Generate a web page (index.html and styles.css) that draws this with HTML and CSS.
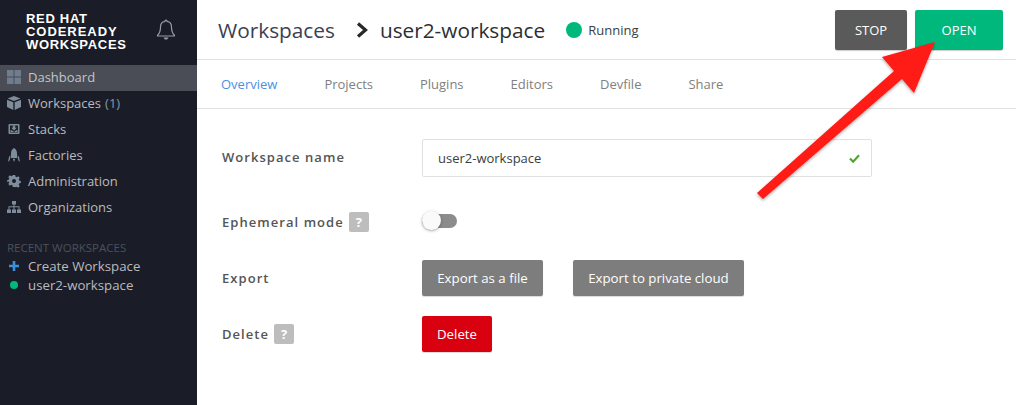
FILE: index.html
```html
<!DOCTYPE html>
<html lang="en">
<head>
  <meta charset="UTF-8">
  <title>Workspaces</title>
  <link rel="stylesheet" href="styles.css">
</head>
<body>
  <div class="page">
    <!-- Left navigation -->
    <aside class="sidebar">
      <div class="brand">
        <div class="logo">
          <div>RED HAT</div>
          <div class="logo-mid">CODEREADY</div>
          <div>WORKSPACES</div>
        </div>
        <svg class="bell" viewBox="0 0 20 22" width="20" height="22">
          <path d="M10 1.200c.7 0 1.100.5 1.100 1.200 2.900.5 4.400 2.800 4.400 5.600 0 3.600.6 6 2.900 8.200v.8H1.600v-.8C3.900 14 4.500 11.600 4.500 8c0-2.800 1.500-5.100 4.400-5.600 0-.7.4-1.200 1.100-1.200z" fill="none" stroke="#9a9ca3" stroke-width="1.200"/>
          <path d="M7.600 18.500h4.800c-.3 1.300-1.200 2.100-2.400 2.100s-2.100-.8-2.400-2.100z" fill="#9a9ca3"/>
        </svg>
      </div>
      <nav class="nav">
        <a class="nav-item active">
          <svg class="nav-icon" viewBox="0 0 14 14"><path d="M0 0h6.500v6.500H0zM7.500 0H14v6.500H7.500zM0 7.500h6.500V14H0zM7.500 7.500H14V14H7.500z" fill="#6f7d8e"/></svg>
          Dashboard
        </a>
        <a class="nav-item">
          <svg class="nav-icon" viewBox="0 0 14 14"><path d="M7 0l6.500 2.500L7 5 .5 2.500zM0 3.800l6.300 2.400V14L0 11zM14 3.800L7.700 6.200V14L14 11z" fill="#7f8c9b"/></svg>
          Workspaces <span class="count">(1)</span>
        </a>
        <a class="nav-item">
          <svg class="nav-icon" viewBox="0 0 14 14"><path fill-rule="evenodd" d="M2.500 2h9a1 1 0 0 1 1 1v8a1 1 0 0 1-1 1h-9a1 1 0 0 1-1-1V3a1 1 0 0 1 1-1zM3 3.500v7h8v-7z" fill="#7f8c9b"/><path d="M5.800 3.500h2.400v2.300h1.600L7 8.500 4.200 5.800h1.600zM3.500 8.200h1.400L7 10l2.100-1.800h1.400V10h-7z" fill="#7f8c9b"/></svg>
          Stacks
        </a>
        <a class="nav-item">
          <svg class="nav-icon" viewBox="0 0 14 14"><path d="M7 0c2 1.300 3 3.200 3 5.500V10H4V5.500C4 3.200 5 1.300 7 0zM3.300 7v3.300L2 13.800 1.200 13l.8-4zM10.700 7v3.300l1.300 3.500.8-.8-.8-4zM5.800 10.700h2.400L7 14z" fill="#7f8c9b"/></svg>
          Factories
        </a>
        <a class="nav-item">
          <svg class="nav-icon" viewBox="0 0 14 14"><path fill-rule="evenodd" d="M5.800 1h2.400l.4 1.700 1.100.5 1.500-.9 1.500 1.700-1 1.400.4 1.100 1.700.4v2.200l-1.700.4-.4 1.100 1 1.400-1.500 1.700-1.500-.9-1.100.5L8.200 13H5.800l-.4-1.700-1.100-.5-1.500.9-1.500-1.700 1-1.400-.4-1.100L.2 8.100V5.900l1.700-.4.4-1.100-1-1.400 1.500-1.700 1.500.9 1.100-.5zM7 5a2 2 0 1 0 0 4 2 2 0 0 0 0-4z" fill="#7f8c9b"/></svg>
          Administration
        </a>
        <a class="nav-item">
          <svg class="nav-icon" viewBox="0 0 14 14"><path d="M5 1h4v3.500H7.500V6.300H12.500V9.500H14V13H10V9.500H11.500V7.300H7.500V9.500H9V13H5V9.500H6.500V7.300H2.500V9.500H4V13H0V9.500H1.500V6.300H6.500V4.500H5z" fill="#7f8c9b"/></svg>
          Organizations
        </a>
      </nav>
      <div class="recent">
        <div class="recent-title">RECENT WORKSPACES</div>
        <a class="recent-item">
          <span class="recent-mark"><svg viewBox="0 0 10 10" width="10" height="10"><path d="M3.700 0h2.600v3.700H10v2.600H6.300V10H3.700V6.300H0V3.700h3.700z" fill="#3d8fd9"/></svg></span>
          Create Workspace
        </a>
        <a class="recent-item">
          <span class="recent-mark"><span class="recent-dot"></span></span>
          user2-workspace
        </a>
      </div>
    </aside>

    <main class="main">
      <header class="toolbar">
        <div class="title">Workspaces</div>
        <svg class="crumb" viewBox="0 0 12 16" width="12" height="16"><path d="M2 1.500L9.500 8 2 14.500" fill="none" stroke="#26282c" stroke-width="3.200"/></svg>
        <div class="title title-dark">user2-workspace</div>
        <span class="status-dot"></span>
        <span class="status">Running</span>
        <div class="toolbar-btns">
          <button class="btn-top btn-stop">STOP</button>
          <button class="btn-top btn-open">OPEN</button>
        </div>
      </header>

      <div class="tabs">
        <a class="tab tab-active">Overview</a>
        <a class="tab">Projects</a>
        <a class="tab">Plugins</a>
        <a class="tab">Editors</a>
        <a class="tab">Devfile</a>
        <a class="tab">Share</a>
      </div>

      <section class="form">
        <div class="row row-name">
          <div class="label">Workspace name</div>
          <div class="field">
            <span>user2-workspace</span>
            <svg viewBox="0 0 12 10" width="11" height="9"><path d="M1 5l3.500 3.500L11 1.500" fill="none" stroke="#4ea42f" stroke-width="2.400"/></svg>
          </div>
        </div>
        <div class="row row-mode">
          <div class="label">Ephemeral mode <span class="help">?</span></div>
          <div class="switch"><span class="knob"></span></div>
        </div>
        <div class="row row-export">
          <div class="label">Export</div>
          <div class="btns">
            <button class="btn btn-grey">Export as a file</button>
            <button class="btn btn-grey">Export to private cloud</button>
          </div>
        </div>
        <div class="row row-delete">
          <div class="label">Delete <span class="help">?</span></div>
          <button class="btn btn-red">Delete</button>
        </div>
      </section>
    </main>
  </div>

  <!-- Annotation arrow drawn over the screenshot -->
  <svg class="arrow" viewBox="0 0 1016 405" width="1016" height="405">
    <defs>
      <filter id="arrowShadow" x="-10%" y="-10%" width="120%" height="120%">
        <feDropShadow dx="0" dy="1.500" stdDeviation="1.500" flood-color="#000" flood-opacity="0.35"/>
      </filter>
    </defs>
    <polygon points="935,42 882,57 894,71 757,193 763,199 902,79 914,93" fill="#ff1a14" filter="url(#arrowShadow)"/>
  </svg>
</body>
</html>
```

FILE: styles.css
```css
html, body {
  margin: 0;
  padding: 0;
  height: 100%;
  overflow: hidden;
  background: #fff;
  font-family: "Open Sans", sans-serif;
}

.page {
  display: flex;
  height: 405px;
}

/* Sidebar */
.sidebar {
  width: 197px;
  flex-shrink: 0;
  background: #1a1d27;
  color: #b9bbbf;
  font-size: 13px;
}

.brand {
  display: flex;
  height: 65px;
  box-sizing: border-box;
  padding: 12px 0 0 26px;
  justify-content: space-between;
}

.logo {
  color: #fff;
  font-family: "Liberation Sans", sans-serif;
  font-weight: 700;
  font-size: 13px;
  line-height: 13px;
  letter-spacing: 0.7px;
}

.logo-mid {
  letter-spacing: 0.95px;
}

.bell {
  margin: 7px 21px 0 0;
}

.nav-item {
  display: flex;
  align-items: center;
  height: 26px;
  box-sizing: border-box;
  padding: 0 0 2px 7px;
}

.nav-item.active {
  background: #4a4d55;
  color: #c3c5c9;
}

.nav-icon {
  width: 14px;
  height: 14px;
  margin-right: 7px;
}

.count {
  margin-left: 4px;
  color: #8a97a6;
}

.recent {
  margin-top: 19px;
}

.recent-title {
  padding-left: 7px;
  font-size: 11.500px;
  line-height: 16px;
  color: #4c505d;
}

.recent-item {
  display: flex;
  align-items: center;
  height: 19px;
  font-size: 13.250px;
}

.recent-mark {
  display: flex;
  justify-content: center;
  width: 28px;
}

.recent-dot {
  width: 8px;
  height: 8px;
  border-radius: 50%;
  background: #00b87c;
}

/* Main area */
.main {
  flex: 1;
  min-width: 0;
}

.toolbar {
  display: flex;
  align-items: center;
  height: 60px;
  box-sizing: border-box;
  border-bottom: 1px solid #e2e2e2;
  padding: 0 13px 0 21px;
}

.title {
  font-size: 20.800px;
  color: #3a4150;
}

.title-dark {
  color: #2b2e33;
}

.crumb {
  margin: 0 12px 0 21px;
}

.status-dot {
  width: 16px;
  height: 16px;
  margin-left: 21px;
  border-radius: 50%;
  background: #00b87c;
}

.status {
  margin-left: 6px;
  font-size: 13px;
  color: #3a3d42;
}

.toolbar-btns {
  display: flex;
  gap: 8px;
  margin-left: auto;
}

.btn-top {
  height: 40px;
  border: 0;
  border-radius: 2px;
  color: #fff;
  font-family: inherit;
  font-size: 13px;
  font-weight: 500;
  box-shadow: 0 1px 1px rgba(0, 0, 0, 0.2);
}

.btn-stop {
  width: 72px;
  background: #5a5a5a;
}

.btn-open {
  width: 88px;
  background: #00b87c;
}

.tabs {
  display: flex;
  align-items: center;
  gap: 47px;
  height: 49px;
  box-sizing: border-box;
  border-bottom: 1px solid #e2e2e2;
  padding-left: 24px;
  font-size: 13px;
  color: #808080;
}

.tab-active {
  color: #4a90e2;
}

/* Form */
.form {
  padding-left: 25px;
}

.row {
  display: flex;
  align-items: center;
}

.label {
  display: flex;
  align-items: center;
  width: 200px;
  font-size: 13px;
  font-weight: 600;
  letter-spacing: 1.050px;
  color: #555;
}

.row-name {
  margin-top: 30px;
}

.row-name .label {
  padding-bottom: 2px;
}

.row-mode {
  height: 20px;
  margin-top: 35px;
}

.row-export {
  margin-top: 28px;
}

.row-delete {
  margin-top: 20px;
}

.field {
  display: flex;
  align-items: center;
  justify-content: space-between;
  width: 450px;
  height: 38px;
  box-sizing: border-box;
  border: 1px solid #e0e0e0;
  border-radius: 2px;
  padding: 0 11px 0 15px;
  font-size: 13px;
  color: #3a3d42;
}

.help {
  width: 20px;
  height: 20px;
  margin-left: 5px;
  border-radius: 2px;
  background: #bdbdbd;
  color: #fff;
  font-size: 13px;
  font-weight: 700;
  line-height: 20px;
  text-align: center;
  letter-spacing: 0;
}

.switch {
  position: relative;
  width: 35px;
  height: 14px;
  margin-top: -3px;
  border-radius: 7px;
  background: #8c8c8c;
}

.knob {
  position: absolute;
  left: 0;
  top: -3px;
  width: 19px;
  height: 19px;
  border-radius: 50%;
  background: #fafafa;
  box-shadow: 0 1px 3px rgba(0, 0, 0, 0.35);
}

.btns {
  display: flex;
  gap: 30px;
}

.btn {
  height: 36px;
  border: 0;
  border-radius: 2px;
  padding: 0 15px;
  color: #fff;
  font-family: inherit;
  font-size: 13.250px;
  box-shadow: 0 1px 1px rgba(0, 0, 0, 0.15);
}

.btn-grey {
  padding: 0 15.250px;
  background: #7d7d7d;
}

.btn-red {
  background: #d9000f;
}

.arrow {
  position: absolute;
  left: 0;
  top: 0;
  pointer-events: none;
}
```
